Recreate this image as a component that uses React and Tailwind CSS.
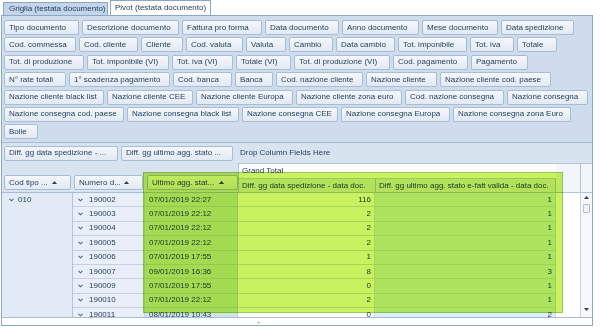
import React from 'react';

const filterRows = [
  [
    ['Tipo documento', 'w-[75px]'],
    ['Descrizione documento', 'w-[97px]'],
    ['Fattura pro forma', 'w-[80px]'],
    ['Data documento', 'w-[74px]'],
    ['Anno documento', 'w-[77px]'],
    ['Mese documento', 'w-[76px]'],
    ['Data spedizione', 'w-[73px]'],
  ],
  [
    ['Cod. commessa', 'w-[72px]'],
    ['Cod. cliente', 'w-[59px]'],
    ['Cliente', 'w-[42px]'],
    ['Cod. valuta', 'w-[57px]'],
    ['Valuta', 'w-[40px]'],
    ['Cambio', 'w-[44px]'],
    ['Data cambio', 'w-[59px]'],
    ['Tot. imponibile', 'w-[69px]'],
    ['Tot. iva', 'w-[44px]'],
    ['Totale', 'w-[40px]'],
  ],
  [
    ['Tot. di produzione', 'w-[80px]'],
    ['Tot. imponibile (VI)', 'w-[82px]'],
    ['Tot. iva (VI)', 'w-[61px]'],
    ['Totale (VI)', 'w-[55px]'],
    ['Tot. di produzione (VI)', 'w-[96px]'],
    ['Cod. pagamento', 'w-[75px]'],
    ['Pagamento', 'w-[57px]'],
  ],
  [
    ['N° rate totali', 'w-[62px]'],
    ['1° scadenza pagamento', 'w-[101px]'],
    ['Cod. banca', 'w-[59px]'],
    ['Banca', 'w-[38px]'],
    ['Cod. nazione cliente', 'w-[87px]'],
    ['Nazione cliente', 'w-[71px]'],
    ['Nazione cliente cod. paese', 'w-[111px]'],
  ],
  [
    ['Nazione cliente black list', 'w-[100px]'],
    ['Nazione cliente CEE', 'w-[86px]'],
    ['Nazione cliente Europa', 'w-[97px]'],
    ['Nazione cliente zona euro', 'w-[106px]'],
    ['Cod. nazione consegna', 'w-[99px]'],
    ['Nazione consegna', 'w-[81px]'],
  ],
  [
    ['Nazione consegna cod. paese', 'w-[120px]'],
    ['Nazione consegna black list', 'w-[112px]'],
    ['Nazione consegna CEE', 'w-[96px]'],
    ['Nazione consegna Europa', 'w-[109px]'],
    ['Nazione consegna zona Euro', 'w-[118px]'],
  ],
  [['Bolle', 'w-[34px]']],
];

const rows = [
  ['190002', '07/01/2019 22:27', '116', '1'],
  ['190003', '07/01/2019 22:12', '2', '1'],
  ['190004', '07/01/2019 22:12', '2', '1'],
  ['190005', '07/01/2019 22:12', '2', '1'],
  ['190006', '07/01/2019 17:55', '1', '1'],
  ['190007', '09/01/2019 16:36', '8', '3'],
  ['190009', '07/01/2019 17:55', '0', '1'],
  ['190010', '07/01/2019 22:12', '2', '1'],
  ['190011', '08/01/2019 10:43', '0', '2'],
];

const SortArrow = () => (
  <svg width="5" height="3" viewBox="0 0 5 3" className="shrink-0">
    <path d="M0 3 L2.5 0 L5 3 Z" fill="#2b3f5c" />
  </svg>
);

const Chevron = () => (
  <svg width="5" height="4" viewBox="0 0 5 4" className="shrink-0">
    <path d="M0.5 0.8 L2.5 2.8 L4.5 0.8" fill="none" stroke="#4f6684" strokeWidth="1.1" />
  </svg>
);

const FieldButton = ({ label, w, sort }) => (
  <div
    className={`${w} h-[15px] shrink-0 flex items-center justify-between pl-[4px] ${sort ? 'pr-[13px]' : 'pr-[2px]'} border border-[#a9bcd6] rounded-[2px] bg-linear-to-b from-[#f5f8fc] to-[#e2e9f3] whitespace-nowrap overflow-hidden`}
  >
    <span>{label}</span>
    {sort && <SortArrow />}
  </div>
);

export default function App() {
  return (
    <div className="relative w-[600px] h-[327px] bg-white overflow-hidden text-[8px] leading-none text-[#1e395b] font-['Liberation_Sans',Arial,sans-serif]">
      {/* Tabs */}
      <div className="h-[15px] flex items-end pl-[3px]">
        <div className="w-[105px] h-[13px] bg-[#c4d4e9] border border-b-0 border-[#8ea6c6] flex items-center pl-[5px] whitespace-nowrap">
          Griglia (testata documento)
        </div>
        <div className="ml-[2px] w-[101px] h-[15px] bg-white border border-b-0 border-[#8ea6c6] flex items-center pl-[4px] whitespace-nowrap">
          Pivot (testata documento)
        </div>
      </div>

      {/* Pivot panel */}
      <div className="ml-[1px] w-[592px] h-[311px] border border-[#8ea6c6] bg-[#cfdcec] flex flex-col">
        {/* Filter area */}
        <div className="h-[126px] shrink-0 pt-[4px] pl-[2px] flex flex-col gap-[2.4px]">
          {filterRows.map((row, i) => (
            <div key={i} className="flex gap-[3px]">
              {row.map(([label, w]) => (
                <FieldButton key={label} label={label} w={w} />
              ))}
            </div>
          ))}
        </div>

        {/* Column / data field area */}
        <div className="h-[21px] shrink-0 border-t border-[#a9bcd6] bg-[#d8e3f0] flex items-center pl-[2px]">
          <FieldButton label="Diff. gg data spedizione - ..." w="w-[114px]" />
          <div className="ml-[3px]">
            <FieldButton label="Diff. gg ultimo agg. stato ..." w="w-[112px]" />
          </div>
          <span className="ml-[7px] whitespace-nowrap">Drop Column Fields Here</span>
        </div>

        {/* Header region */}
        <div className="h-[30px] shrink-0 flex bg-[#d8e3f0]">
          <div className="w-[236px] shrink-0 flex items-end gap-[3px] pl-[2px] pb-[2px] border-b border-[#a9bcd6]">
            <FieldButton label="Cod tipo ..." w="w-[67px]" sort />
            <FieldButton label="Numero d..." w="w-[69px]" sort />
            <div className="ml-[1px]">
              <FieldButton label="Ultimo agg. stat..." w="w-[91px]" sort />
            </div>
          </div>
          <div className="w-[318px] shrink-0 flex flex-col border-l border-t border-[#b3c3d9]">
            <div className="h-[15px] bg-white flex items-center pl-[3px] border-b border-[#c9d5e5]">Grand Total</div>
            <div className="flex-1 flex">
              <div className="w-[137px] shrink-0 bg-[#e6edf6] border-r border-b border-[#b8c7dc] flex items-center pl-[3px] whitespace-nowrap">
                Diff. gg data spedizione - data doc.
              </div>
              <div className="flex-1 bg-[#e6edf6] border-r border-b border-[#b8c7dc] flex items-center pl-[3px] whitespace-nowrap">
                Diff. gg ultimo agg. stato e-fatt valida - data doc.
              </div>
            </div>
          </div>
          <div className="w-[24px] shrink-0 bg-[#f2f5f9] border-t border-b border-[#b3c3d9]" />
          <div className="w-[12px] shrink-0 bg-[#f2f5f9] border-t border-l border-b border-[#b3c3d9]" />
        </div>

        {/* Data rows */}
        <div className="h-[124px] shrink-0 flex overflow-hidden">
          <div className="w-[554px] shrink-0 flex flex-col">
            {rows.map(([num, date, a, b], i) => (
              <div key={num} className="h-[14.4px] shrink-0 flex">
                <div className="w-[71px] shrink-0 bg-[#e2eaf5] border-r border-[#b3c3d9] flex items-center pl-[7px] gap-[4px]">
                  {i === 0 && (
                    <>
                      <Chevron />
                      <span>010</span>
                    </>
                  )}
                </div>
                <div className="w-[72px] shrink-0 bg-[#e9eff8] border-r border-b border-[#c3d1e3] flex items-center pl-[5px] gap-[6px]">
                  <Chevron />
                  <span>{num}</span>
                </div>
                <div className="w-[93px] shrink-0 bg-[#cfe6dc] border-r border-b border-[#bcd3cc] flex items-center pl-[4px]">
                  {date}
                </div>
                <div className="w-[137px] shrink-0 bg-white border-r border-b border-[#dadfe6] flex items-center justify-end pr-[3px]">
                  {a}
                </div>
                <div className="w-[181px] shrink-0 bg-[#dbf0ff] border-r border-b border-[#cfdbe8] flex items-center justify-end pr-[3px]">
                  {b}
                </div>
              </div>
            ))}
          </div>
          <div className="w-[24px] shrink-0 bg-white" />
          <div className="w-[12px] shrink-0 bg-[#f6f8fb] border-l border-[#c9d3e0] flex flex-col items-center">
            <div className="mt-[3px]">
              <SortArrow />
            </div>
            <div className="mt-[5px] w-[7px] h-[9px] border border-[#b3bfcf] bg-[#eef1f5] rounded-[1px]" />
            <div className="flex-1" />
            <div className="mb-[6px] rotate-180">
              <SortArrow />
            </div>
          </div>
        </div>

        {/* Bottom splitter */}
        <div className="flex-1 border-t border-[#a9bcd6] bg-white flex items-center">
          <span className="ml-[255px] text-[6px] text-[#8d99a8]">+</span>
        </div>
      </div>

      {/* Green highlight over selected area */}
      <div className="absolute left-[143px] top-[172px] w-[420px] h-[141px] bg-[#c8f25f] mix-blend-multiply border border-[#9bc85a] pointer-events-none" />
    </div>
  );
}
